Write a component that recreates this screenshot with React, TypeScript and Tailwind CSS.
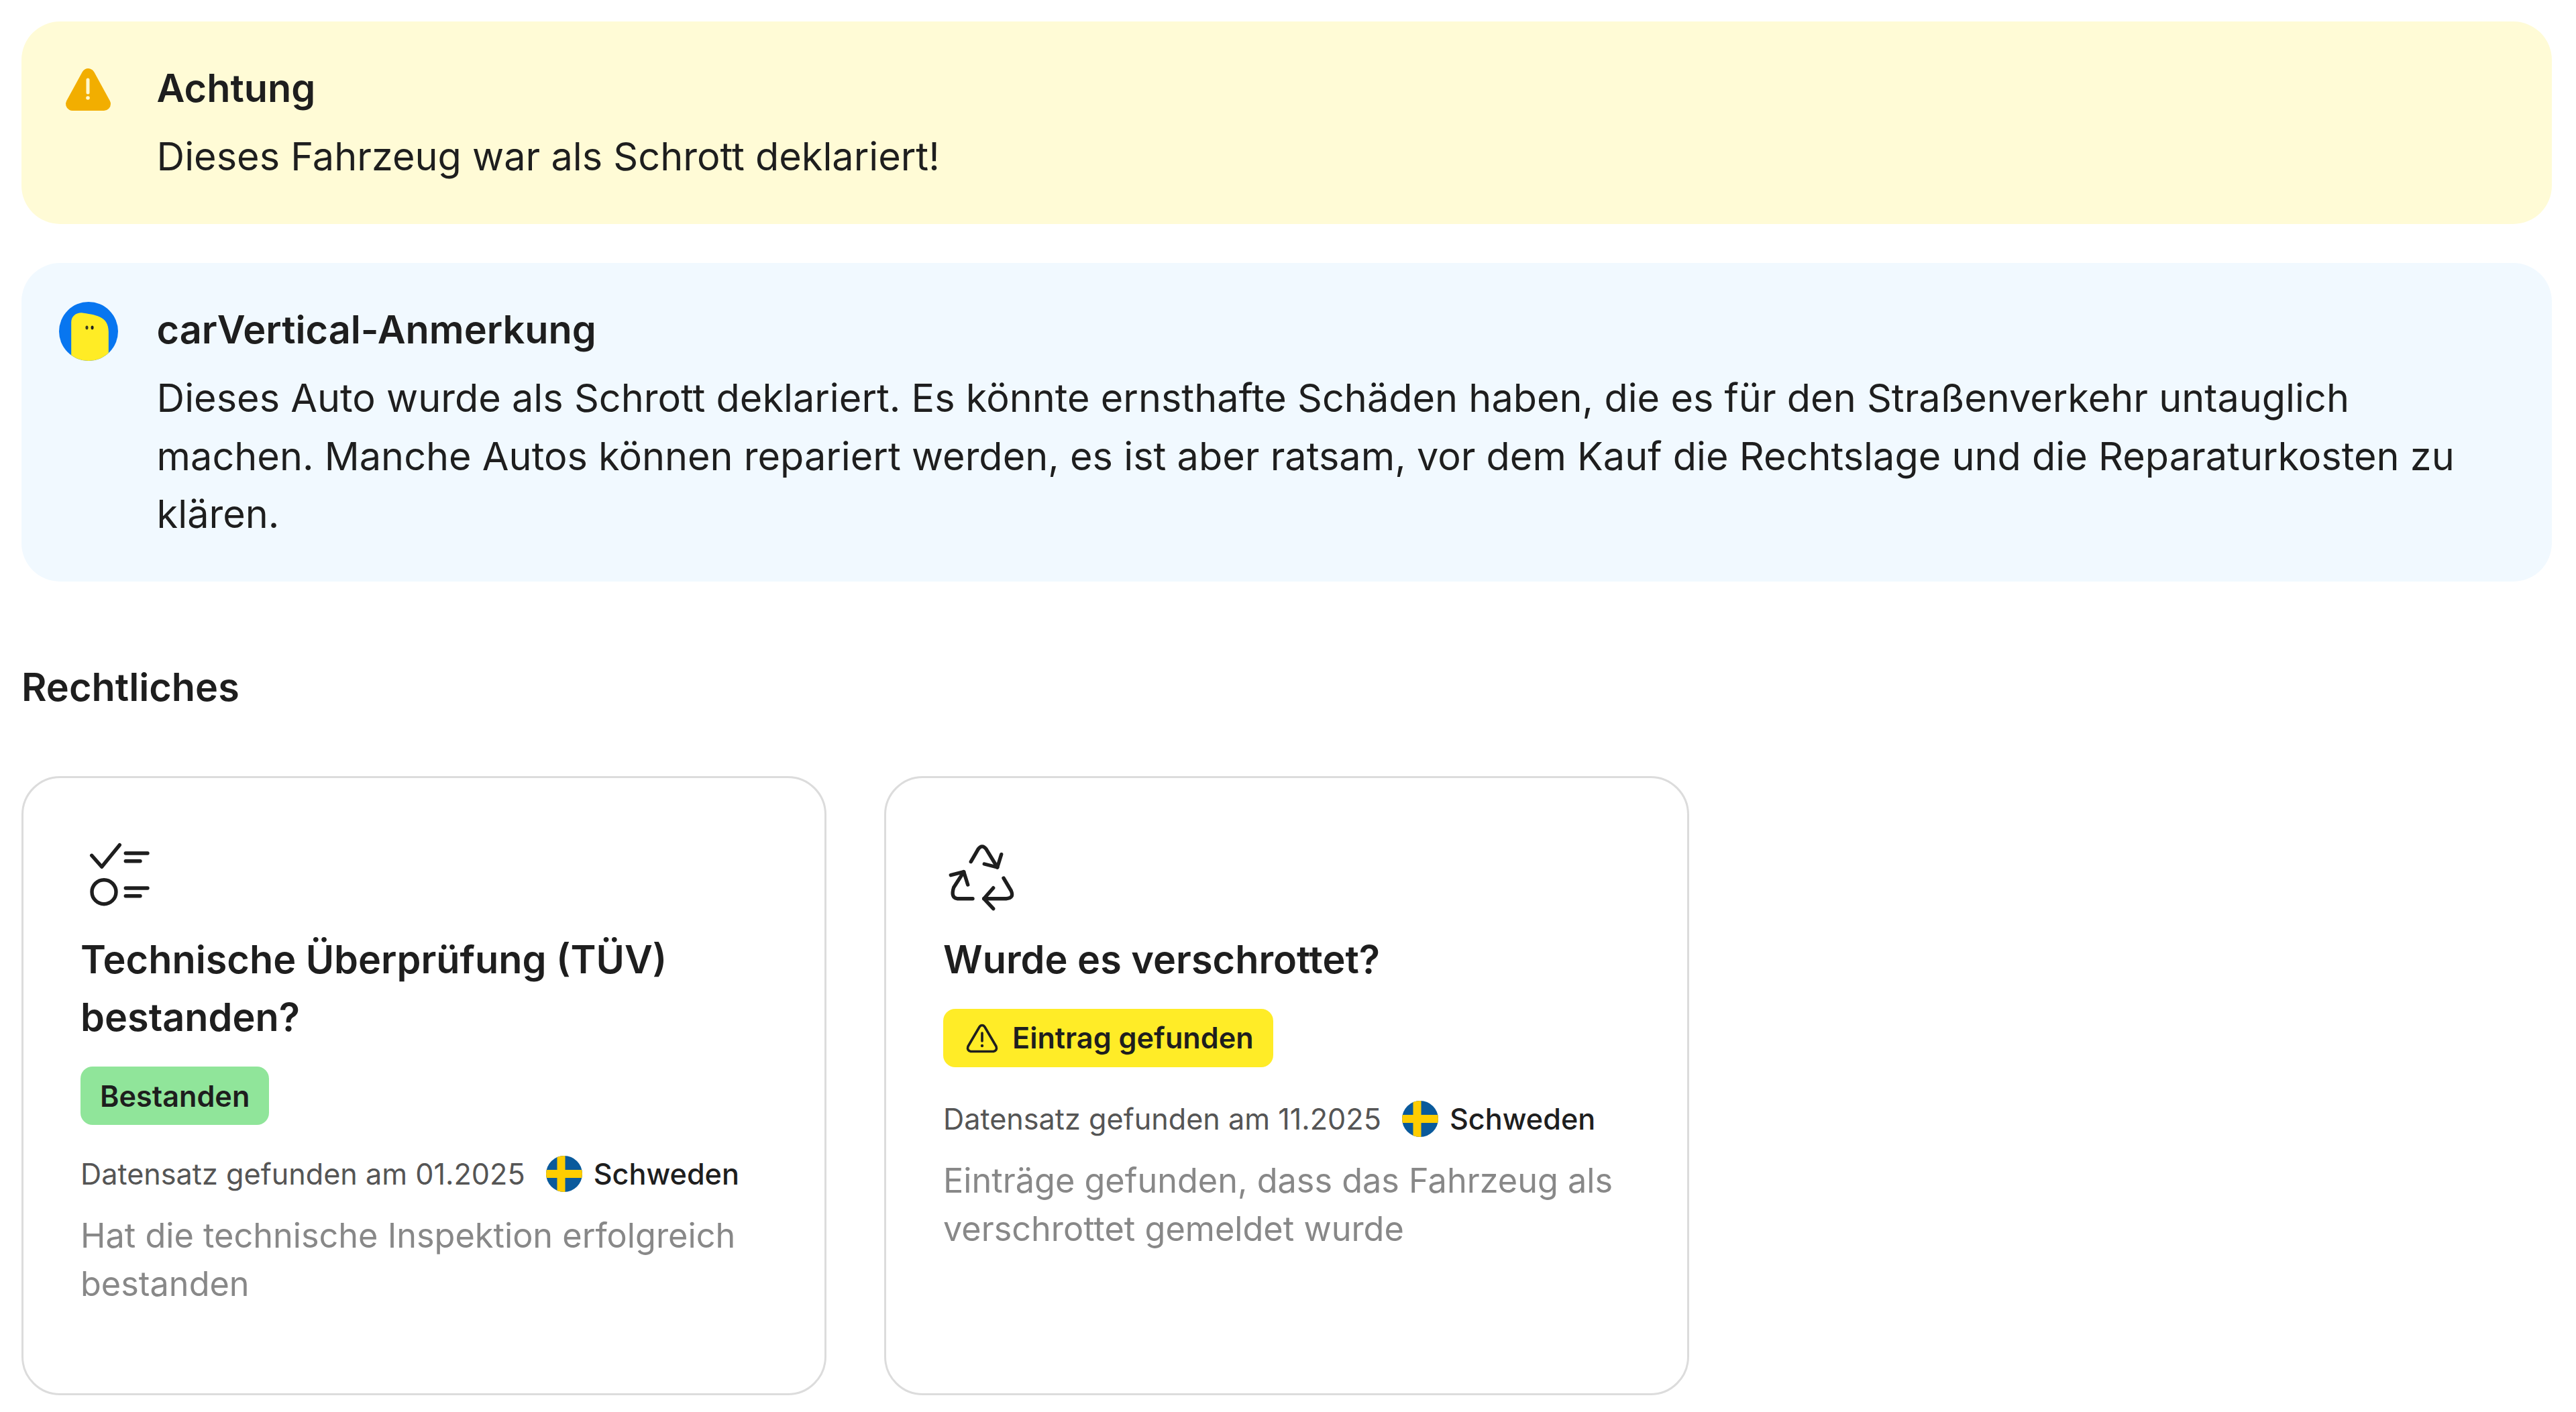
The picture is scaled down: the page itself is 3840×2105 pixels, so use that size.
import React from "react";

function WarningFilled() {
  return (
    <svg width="88" height="88" viewBox="0 0 88 88" fill="none" className="shrink-0">
      <path d="M43.5 22L20 65H67Z" fill="#f2ae00" stroke="#f2ae00" strokeWidth="20" strokeLinejoin="round" />
      <path d="M43 29V48" stroke="#fff8cf" strokeWidth="5" strokeLinecap="round" />
      <circle cx="43" cy="56" r="2.8" fill="#fff8cf" />
    </svg>
  );
}

function DuckLogo() {
  return (
    <svg width="88" height="88" viewBox="0 0 87 87" className="shrink-0">
      <defs>
        <clipPath id="duck-clip">
          <circle cx="43.5" cy="43.5" r="43.5" />
        </clipPath>
      </defs>
      <g clipPath="url(#duck-clip)">
        <rect width="87" height="87" fill="#0876f0" />
        <path d="M18 30C18 21 25 16 33 16C52 19 73 20 73 44V87H18Z" fill="#ffec25" />
      </g>
      <ellipse cx="41" cy="38" rx="2" ry="2.8" fill="#3a3a20" />
      <ellipse cx="49" cy="38" rx="2" ry="2.8" fill="#1e1e1e" />
    </svg>
  );
}

function ChecklistIcon() {
  return (
    <svg width="117" height="117" viewBox="0 0 117 117" fill="none" stroke="#1e1e1e" strokeWidth="5.4" strokeLinecap="round" strokeLinejoin="round">
      <path d="M16.7 28.3L31.7 45.3L58.3 12.7" />
      <path d="M67.3 25H100M67.3 36.7H89" />
      <circle cx="35" cy="82.7" r="18" />
      <path d="M67.3 77H100M67.3 88.7H89" />
    </svg>
  );
}

function RecycleIcon() {
  return (
    <svg width="117" height="117" viewBox="0 0 117 117" fill="none" stroke="#1e1e1e" strokeWidth="5.4" strokeLinecap="round" strokeLinejoin="round">
      <path d="M41.3 37.7L52.3 18.7Q58 11 64 18.7L80.7 46" />
      <path d="M61.3 41L80.7 46L86.7 26.7" />
      <path d="M44 92.7H20.7Q11 91 15.7 76L30.7 52.7" />
      <path d="M11.3 57.7L30.7 52.7L36.7 72" />
      <path d="M90 62L101.3 81Q106 92 94 92.7H60.7" />
      <path d="M74.7 76.7L60.7 92.7L74.7 107.7" />
    </svg>
  );
}

function WarningOutline() {
  return (
    <svg width="58" height="58" viewBox="0 0 58 58" fill="none" className="shrink-0">
      <path d="M29 9.5Q31.5 9.5 33 12L50 41Q52 47 46 48.5H12Q6 47 8 41L25 12Q26.5 9.5 29 9.5Z" stroke="#1e1e1e" strokeWidth="3.6" strokeLinejoin="round" />
      <path d="M29 21V33" stroke="#1e1e1e" strokeWidth="3.6" strokeLinecap="round" />
      <circle cx="29" cy="40" r="2.2" fill="#1e1e1e" />
    </svg>
  );
}

function SwedenFlag({ id }: { id: string }) {
  return (
    <svg width="54" height="54" viewBox="0 0 54 54" className="shrink-0">
      <defs>
        <clipPath id={id}>
          <circle cx="27" cy="27" r="27" />
        </clipPath>
      </defs>
      <g clipPath={`url(#${id})`}>
        <rect width="54" height="54" fill="#0a5a9c" />
        <rect x="16.5" width="12" height="54" fill="#ffcd00" />
        <rect y="21" width="54" height="12" fill="#ffcd00" />
      </g>
    </svg>
  );
}

type AlertProps = {
  bg: string;
  icon: React.ReactNode;
  title: string;
  children: React.ReactNode;
};

function Alert({ bg, icon, title, children }: AlertProps) {
  return (
    <section className={`flex gap-[58px] rounded-[57.6px] py-[57.6px] pr-[57.6px] pl-[55.6px] ${bg}`}>
      {icon}
      <div className="flex flex-col gap-[16.4px] text-[57.6px] leading-[86.4px]">
        <h3 className="-mt-[2px] font-semibold">{title}</h3>
        <p>{children}</p>
      </div>
    </section>
  );
}

type CardProps = {
  flagId: string;
  icon: React.ReactNode;
  title: React.ReactNode;
  badge: React.ReactNode;
  date: string;
  description: React.ReactNode;
};

function Card({ flagId, icon, title, badge, date, description }: CardProps) {
  return (
    <article className="flex flex-col rounded-[57.6px] border-[3px] border-[#dcdcdc] bg-white px-[85px] pt-[87px] pb-[127px]">
      {icon}
      <h3 className="mt-[23px] text-[57.6px] leading-[86.4px] font-semibold">{title}</h3>
      <div className="mt-[31px] flex">{badge}</div>
      <div className="mt-[46px] flex h-[54px] items-center text-[43.2px] whitespace-nowrap">
        <span className="text-[#555555]">{date}</span>
        <span className="ml-[31px] mr-[17px]">
          <SwedenFlag id={flagId} />
        </span>
        <span className="font-medium text-[#1e1e1e]">Schweden</span>
      </div>
      <p className="mt-[29px] text-[50.4px] leading-[72px] text-[#888888]">{description}</p>
    </article>
  );
}

export default function App() {
  return (
    <main className="flex h-screen flex-col overflow-hidden bg-white pt-[32px] pr-[36px] pl-[32px] font-['Inter',sans-serif] text-[#1e1e1e]">
      <div className="flex flex-col gap-[57.6px]">
        <Alert bg="bg-[#fffbd6]" icon={<WarningFilled />} title="Achtung">
          Dieses Fahrzeug war als Schrott deklariert!
        </Alert>
        <Alert bg="bg-[#f1f9ff]" icon={<DuckLogo />} title="carVertical-Anmerkung">
          Dieses Auto wurde als Schrott deklariert. Es könnte ernsthafte Schäden haben, die es für den Straßenverkehr untauglich machen. Manche Autos können repariert werden, es ist aber ratsam, vor dem Kauf die Rechtslage und die Reparaturkosten zu klären.
        </Alert>
      </div>

      <h2 className="mt-[114px] text-[57.6px] leading-[86.4px] font-semibold">Rechtliches</h2>

      <div className="mt-[89px] grid grid-cols-3 gap-[86px]">
        <Card
          flagId="flag-first"
          icon={<ChecklistIcon />}
          title="Technische Überprüfung (TÜV) bestanden?"
          badge={
            <span className="inline-flex h-[87px] items-center rounded-[18px] bg-[#90e59a] px-[29px] text-[43.2px] font-semibold">
              Bestanden
            </span>
          }
          date="Datensatz gefunden am 01.2025"
          description="Hat die technische Inspektion erfolgreich bestanden"
        />
        <Card
          flagId="flag-second"
          icon={<RecycleIcon />}
          title="Wurde es verschrottet?"
          badge={
            <span className="mb-[4px] inline-flex h-[87px] items-center gap-[16px] rounded-[18px] bg-[#ffec27] px-[29px] text-[43.2px] font-semibold">
              <WarningOutline />
              Eintrag gefunden
            </span>
          }
          date="Datensatz gefunden am 11.2025"
          description="Einträge gefunden, dass das Fahrzeug als verschrottet gemeldet wurde"
        />
      </div>
    </main>
  );
}
